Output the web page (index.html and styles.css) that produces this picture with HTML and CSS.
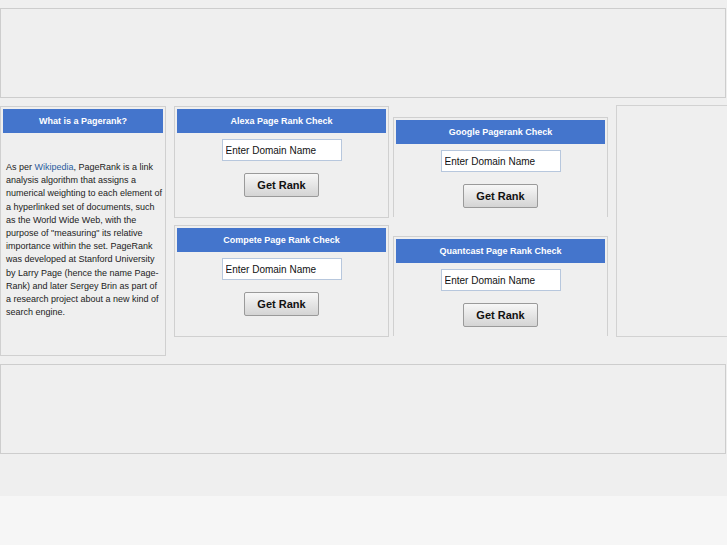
FILE: index.html
```html
<!DOCTYPE html>
<html lang="en">
<head>
    <meta charset="UTF-8">
    <meta name="viewport" content="width=device-width, initial-scale=1.0">
    <title>Page Rank Check</title>
    <link rel="stylesheet" href="styles.css">
</head>

<body>
    <div class="page">
        <div class="banner"></div>

        <div class="main">
            <div class="col col-left">
                <div class="box info-box">
                    <div class="box-title">What is a Pagerank?</div>
                    <p class="info-text">
                        As per <a href="#">Wikipedia</a>, PageRank is a link analysis algorithm that assigns a
                        numerical weighting to each element of a hyperlinked set of documents, such as the World
                        Wide Web, with the purpose of "measuring" its relative importance within the set. PageRank
                        was developed at Stanford University by Larry Page (hence the name Page-Rank) and later
                        Sergey Brin as part of a research project about a new kind of search engine.
                    </p>
                </div>
            </div>

            <div class="col col-mid">
                <div class="box check-box">
                    <div class="box-title">Alexa Page Rank Check</div>
                    <input class="domain" type="text" value="Enter Domain Name">
                    <button class="btn">Get Rank</button>
                </div>
                <div class="box check-box">
                    <div class="box-title">Compete Page Rank Check</div>
                    <input class="domain" type="text" value="Enter Domain Name">
                    <button class="btn">Get Rank</button>
                </div>
            </div>

            <div class="col col-3">
                <div class="box check-box open-box">
                    <div class="box-title">Google Pagerank Check</div>
                    <input class="domain" type="text" value="Enter Domain Name">
                    <button class="btn">Get Rank</button>
                </div>
                <div class="box check-box open-box">
                    <div class="box-title">Quantcast Page Rank Check</div>
                    <input class="domain" type="text" value="Enter Domain Name">
                    <button class="btn">Get Rank</button>
                </div>
            </div>

            <div class="col col-right">
                <div class="box side-box"></div>
            </div>
        </div>

        <div class="banner bottom-banner"></div>
    </div>
</body>
</html>
```

FILE: styles.css
```css
html,
body {
    margin: 0;
    padding: 0;
}

body {
    background-color: #f6f6f6;
    font-family: "Liberation Sans", Arial, sans-serif;
    overflow: hidden;
}

.page {
    background-color: #efefef;
    padding-top: 8px;
    height: 488px;
}

.banner {
    height: 88px;
    border: 1px solid #cdcdcd;
    margin-right: 1px;
}

.bottom-banner {
    margin-top: 8px;
}

.main {
    display: flex;
    align-items: flex-start;
    margin-top: 8px;
    width: 760px;
}

.box {
    border: 1px solid #d0d0d0;
    box-sizing: border-box;
    padding: 2px;
}

.box-title {
    align-self: stretch;
    background-color: #4475cc;
    color: #fff;
    font-size: 9px;
    font-weight: bold;
    height: 24px;
    line-height: 24px;
    text-align: center;
}

/* left column */
.col-left {
    width: 166px;
}

.info-box {
    height: 250px;
}

.info-text {
    margin: 28px 0 0 3px;
    font-size: 9px;
    line-height: 13.2px;
    color: #222;
    width: 157px;
}

.info-text a {
    color: #2a5c9e;
    text-decoration: none;
}

/* rank check boxes */
.col {
    display: flex;
    flex-direction: column;
}

.col-mid {
    width: 215px;
    margin-left: 8px;
    gap: 7px;
}

.col-3 {
    width: 215px;
    margin-left: 4px;
    padding-top: 11px;
    gap: 19px;
}

.check-box {
    display: flex;
    flex-direction: column;
    align-items: center;
    height: 112px;
}

.open-box {
    height: 100px;
    border-bottom: none;
}

.domain {
    margin-top: 6px;
    width: 120px;
    height: 22px;
    box-sizing: border-box;
    border: 1px solid #b7c7dd;
    background: #fff;
    padding: 0 3px;
    font-family: "Liberation Sans", Arial, sans-serif;
    font-size: 10px;
    color: #111;
    outline: none;
}

.btn {
    margin-top: 12px;
    width: 75px;
    height: 24px;
    border: 1px solid #9a9a9a;
    border-radius: 2px;
    background: linear-gradient(#f7f7f7, #d4d4d4);
    font-family: "Liberation Sans", Arial, sans-serif;
    font-size: 11px;
    font-weight: bold;
    color: #111;
    cursor: pointer;
}

/* right column */
.col-right {
    margin-left: 8px;
    margin-top: -1px;
}

.side-box {
    width: 140px;
    height: 232px;
    border-color: #d2d2d2;
}
```
